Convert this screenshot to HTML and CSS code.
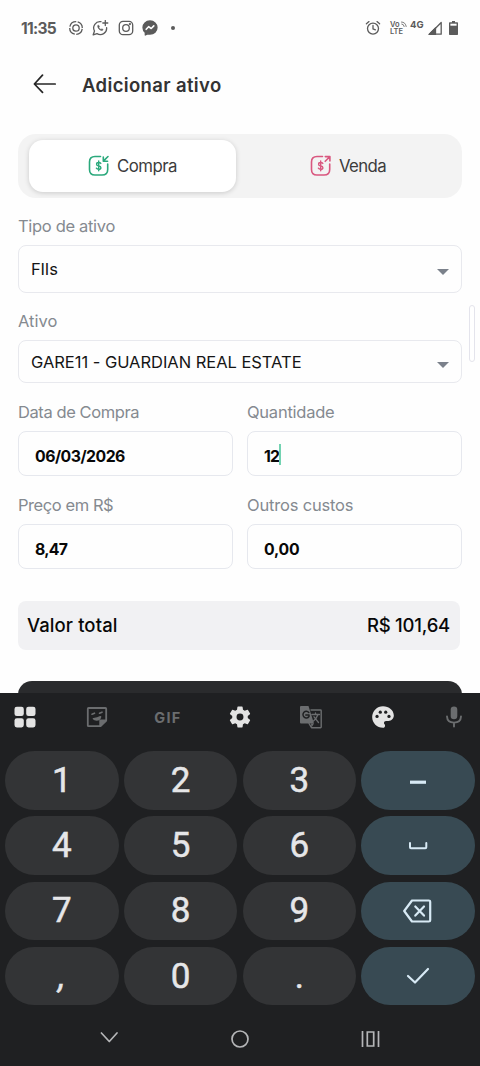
FILE: index.html
```html
<!DOCTYPE html>
<html lang="pt-BR">
<head>
<meta charset="utf-8">
<title>Adicionar ativo</title>
<link rel="stylesheet" href="styles.css">
</head>
<body>
<div class="screen">
  <div class="status">
    <div class="status-left">
      <span class="clock">11:35</span>
      <svg class="s-ico" width="16" height="16" viewBox="0 0 16 16"><circle cx="8" cy="8" r="6.3" stroke-dasharray="8.400 1.500" stroke-dashoffset="-1" class="butt"/><circle cx="8" cy="8" r="3.2"/></svg>
      <svg class="s-ico" width="17" height="16" viewBox="0 0 17 16"><path d="M9 1.7A6.3 6.3 0 0 0 2.500 11L1.200 14.800 5 13.600A6.3 6.3 0 0 0 14.600 7.600M13.300.500V5.500M10.800 3H15.800"/><path d="M5.800 5.500C5.200 7 7 10.300 9.800 10.400 11 10.300 11.200 9.800 11 9.400L9.800 8.900 9 9.600C8 9.200 7.200 8.400 6.900 7.500L7.400 6.700 6.800 5.500Z" class="solid thin"/></svg>
      <svg class="s-ico" width="16" height="16" viewBox="0 0 16 16"><rect x="1.3" y="1.3" width="13.4" height="13.4" rx="3.7"/><circle cx="8" cy="8" r="3.3"/><circle cx="11.9" cy="4.1" r=".5"/></svg>
      <svg class="s-ico" width="16" height="16" viewBox="0 0 16 16"><path d="M8 1C4 1 1 3.8 1 7.500c0 2 .8 3.700 2.300 4.900V15l2.300-1.200c.8.2 1.600.3 2.400.3 4 0 7-2.900 7-6.600S12 1 8 1Z" class="solid"/><path d="M4.200 9.300 6.600 6.700 9.200 8.500 11.800 5.900" stroke="#fff" stroke-width="1.600"/></svg>
      <span class="dot"></span>
    </div>
    <div class="status-right">
      <svg class="s-ico alarm" width="16" height="16" viewBox="0 0 16 16"><circle cx="8" cy="8.600" r="5.500"/><path d="M8 5.400V8.900L10.400 9.800M1.400 3.800 4 1.600M14.600 3.800 12 1.600"/></svg>
      <span class="volte"><span class="vo">Vo<svg width="6" height="6" viewBox="0 0 6 6"><path d="M.5 1Q4.500 1 5.200 5.500M.8 3Q2.800 3 3.200 5.500"/></svg></span><span>LTE</span></span>
      <span class="net">4G</span>
      <svg class="s-ico signal" width="14" height="14" viewBox="0 0 14 14"><path d="M1.500 13.200 13.200 1.500V13.200Z"/><path d="M1 13.500 7.500 7V13.500Z" class="solid"/></svg>
      <svg class="battery" width="9" height="14" viewBox="0 0 9 14"><path d="M3 0H6V1.300H8.300Q9 1.300 9 2V13.300Q9 14 8.300 14H.7Q0 14 0 13.300V2Q0 1.300.7 1.300H3Z" fill="#5b5b5b"/><path d="M1.400 2.700H7.600V4.700H1.400Z" fill="#fff"/></svg>
    </div>
  </div>

  <header class="header">
    <svg class="back" width="24" height="20" viewBox="0 0 24 20"><path d="M9.500 1.200 1.400 10 9.500 18.400M1.600 10H22.200"/></svg>
    <h1>Adicionar ativo</h1>
  </header>

  <main class="form">
    <div class="segment">
      <button class="seg active">
        <svg class="seg-ico buy" width="22" height="22" viewBox="0 0 22 22"><path d="M12.500 1.500H7Q1.500 1.500 1.500 7V14.500Q1.500 20 7 20H14Q19.700 20 19.700 14.500V9"/><path d="M20 1.500 15.600 5.900M15.300 2V6.300H19.600"/><path class="cur" d="M12.800 8.400Q12.200 7.500 10.600 7.500 8.600 7.500 8.600 9.200 8.600 10.700 10.700 10.900 12.900 11.200 12.900 12.700 12.900 14.300 10.700 14.300 9 14.300 8.400 13.200M10.700 6V15.800"/></svg>
        <span class="t-compra">Compra</span>
      </button>
      <button class="seg sell-tab">
        <svg class="seg-ico sell" width="22" height="22" viewBox="0 0 22 22"><path d="M12.500 1.500H7Q1.500 1.500 1.500 7V14.500Q1.500 20 7 20H14Q19.700 20 19.700 14.500V9"/><path d="M15.200 6.300 19.700 1.800M15.300 1.600H19.900V6"/><path class="cur" d="M12.800 8.400Q12.200 7.500 10.600 7.500 8.600 7.500 8.600 9.200 8.600 10.700 10.700 10.900 12.900 11.200 12.900 12.700 12.900 14.300 10.700 14.300 9 14.300 8.400 13.200M10.700 6V15.800"/></svg>
        <span class="t-venda">Venda</span>
      </button>
    </div>

    <label class="label l1"><span class="t-tipo">Tipo de ativo</span></label>
    <div class="select s1"><span class="t-fiis">FIIs</span><i class="caret"></i></div>

    <label class="label l2"><span>Ativo</span></label>
    <div class="select s2"><span class="t-gare">GARE11 - GUARDIAN REAL ESTATE</span><i class="caret"></i></div>

    <div class="pair">
      <div><label class="label"><span class="t-data">Data de Compra</span></label><div class="input"><span class="t-date">06/03/2026</span></div></div>
      <div><label class="label"><span class="t-qtd">Quantidade</span></label><div class="input"><span class="t-qty">12</span><i class="cursor"></i></div></div>
    </div>
    <div class="pair">
      <div><label class="label"><span class="t-preco">Preço em R$</span></label><div class="input"><span class="t-price">8,47</span></div></div>
      <div><label class="label"><span class="t-outros">Outros custos</span></label><div class="input"><span class="t-cost">0,00</span></div></div>
    </div>

    <div class="total"><span class="t-valor">Valor total</span><span class="t-sum">R$ 101,64</span></div>
    <div class="submit"></div>
  </main>
  <i class="scroll"></i>

  <section class="keyboard">
    <div class="tools">
      <span class="tool"><svg width="24" height="24" viewBox="0 0 24 24" fill="#e3e3e3"><rect x="1.500" y="1.800" width="9.300" height="9.200" rx="2.300"/><rect x="13.200" y="1.800" width="9.300" height="9.200" rx="2.300"/><rect x="1.500" y="13.200" width="9.300" height="9.200" rx="2.300"/><rect x="13.200" y="13.200" width="9.300" height="9.200" rx="2.300"/></svg></span>
      <span class="tool"><svg class="dim" width="24" height="24" viewBox="0 0 24 24"><path d="M3.500 3H20.500Q21.200 3 21.200 3.700V15.500L15.500 21.200H3.500Q2.800 21.200 2.800 20.500V3.700Q2.800 3 3.500 3Z"/><path d="M15.200 21V15.300H21Z" fill="#6b6d6f"/><path d="M7 9.200 9.500 8.200M14.500 8.200 17 7.200M8.500 13.700Q12.500 13.700 15.500 11.800 15 14.700 11.500 14.900 9.500 14.900 8.500 13.700Z" stroke-width="1.600"/></svg></span>
      <span class="tool"><span class="gif">GIF</span></span>
      <span class="tool"><svg width="26" height="26" viewBox="0 0 24 24" fill="#e3e3e3"><path d="M19.140 12.940c.04-.3.060-.61.060-.94 0-.32-.02-.64-.07-.94l2.030-1.580a.49.49 0 0 0 .12-.61l-1.920-3.320a.49.49 0 0 0-.59-.22l-2.390.96c-.5-.38-1.030-.7-1.620-.94L14.400 2.810a.48.48 0 0 0-.48-.41h-3.840a.47.47 0 0 0-.47.41L9.250 5.350c-.59.24-1.130.57-1.620.94l-2.390-.96a.48.48 0 0 0-.59.22L2.740 8.870a.47.47 0 0 0 .12.610l2.030 1.580c-.05.3-.09.63-.09.94s.02.64.07.94l-2.030 1.580a.49.49 0 0 0-.12.610l1.920 3.320c.12.22.37.29.59.22l2.390-.96c.5.38 1.030.7 1.620.94l.36 2.540c.05.24.24.41.48.41h3.840c.24 0 .44-.17.470-.41l.36-2.540c.59-.24 1.130-.56 1.620-.94l2.390.96c.22.080.47 0 .59-.22l1.920-3.320a.47.47 0 0 0-.12-.610zM12 15.200A3.200 3.200 0 1 1 12 8.800a3.200 3.200 0 0 1 0 6.400Z"/></svg></span>
      <span class="tool"><svg class="dim" width="24" height="24" viewBox="0 0 24 24"><path d="M12 5H21.500Q22.200 5 22.200 5.700V22Q22.200 22.700 21.500 22.700H12.500L10 18.500" stroke-width="1.400"/><path d="M2 1H9.500L15 18.500H2Q1 18.500 1 17.500V2Q1 1 2 1Z" fill="#6b6d6f" stroke="none"/><path d="M12 18.500H15L12.500 22.500Z" fill="#6b6d6f" stroke="none"/><path d="M9.800 7.500A3.300 3.300 0 1 0 10 11.500V10H6.800" stroke="#1f2022" stroke-width="1.500"/><path d="M12.800 9.500H20.500M16.500 8V9.500M19 9.500Q17.500 13.500 14.500 16M15 11.800 19.500 17.500" stroke-width="1.300"/></svg></span>
      <span class="tool"><svg width="26" height="26" viewBox="0 0 24 24" fill="#e3e3e3"><path d="M12 2C6.500 2 2 6.500 2 12c0 5.500 4.500 10 10 10 1.100 0 1.900-.8 1.900-1.900 0-.6-.2-1-.5-1.300-.3-.4-.5-.8-.5-1.300 0-1.100.8-1.900 1.900-1.900h2.200c2.800 0 5-2.300 5-5C22 5.700 17.500 2 12 2Z"/><g fill="#1f2022"><circle cx="6.500" cy="11.500" r="1.500"/><circle cx="9.500" cy="7.500" r="1.500"/><circle cx="14.500" cy="7.500" r="1.500"/><circle cx="17.500" cy="11.500" r="1.500"/></g></svg></span>
      <span class="tool"><svg class="dim" width="24" height="24" viewBox="0 0 24 24"><rect x="8.700" y="1.500" width="6.600" height="12.800" rx="3.300" fill="#6b6d6f" stroke="none"/><path d="M5 11.500Q5.300 17.600 12 17.600T19 11.500M12 17.600V21.500" stroke-width="1.900"/></svg></span>
    </div>
    <div class="keys">
      <div class="key">1</div><div class="key">2</div><div class="key">3</div>
      <div class="key fn"><svg width="30" height="30" viewBox="0 0 30 30"><path class="dash" d="M7 17.200H23"/></svg></div>
      <div class="key">4</div><div class="key">5</div><div class="key">6</div>
      <div class="key fn"><svg width="30" height="30" viewBox="0 0 30 30"><path d="M7 12V16.300Q7 17.300 8 17.300H22.300Q23.300 17.300 23.300 16.300V12" stroke-width="2"/></svg></div>
      <div class="key">7</div><div class="key">8</div><div class="key">9</div>
      <div class="key fn"><svg width="30" height="30" viewBox="0 0 30 30"><path d="M9 4.500H25.800Q27.200 4.500 27.200 5.800V24.200Q27.200 25.500 25.800 25.500H9L1.200 15Z" stroke-width="2.200"/><path d="M12.300 10.500 21 19.600M21 10.500 12.300 19.600" stroke-width="2.200"/></svg></div>
      <div class="key comma">,</div><div class="key">0</div><div class="key">.</div>
      <div class="key fn"><svg width="30" height="30" viewBox="0 0 30 30"><path d="M5 15 12 21.500 25 8" stroke-width="2.200"/></svg></div>
    </div>
    <div class="nav">
      <svg width="20" height="20" viewBox="0 0 20 20"><path d="M2.400 4 10.300 12.500 18 4"/></svg>
      <svg width="20" height="20" viewBox="0 0 20 20"><circle cx="10" cy="10" r="8"/></svg>
      <svg width="20" height="20" viewBox="0 0 20 20"><path class="square" d="M2.500 2V18M18.500 2V18M7.300 3H13.700V17H7.300Z"/></svg>
    </div>
  </section>
</div>
</body>
</html>
```
FILE: styles.css
```css
* { box-sizing: border-box; }
body { margin: 0; background: #fefefe; font-family: Inter, "Liberation Sans", sans-serif; }
svg { display: block; flex: none; }
svg path, svg circle, svg rect { stroke-linecap: round; stroke-linejoin: round; }
svg .butt, svg .dash { stroke-linecap: butt; }
svg .square { stroke-linecap: butt; stroke-linejoin: miter; }
.screen { position: relative; width: 480px; height: 1066px; overflow: hidden; display: flex; flex-direction: column; background: #fefefe; }

.status { height: 56px; flex: none; padding: 0 21px; display: flex; justify-content: space-between; align-items: center; color: #5b5b5b; }
.status-left, .status-right { display: flex; align-items: center; }
.clock { width: 47px; font-size: 15.500px; font-weight: 700; letter-spacing: -.7px; white-space: nowrap; }
.s-ico { fill: none; stroke: #5b5b5b; stroke-width: 1.300; }
.s-ico .solid { fill: #5b5b5b; }
.s-ico .thin { stroke-width: .6; }
.status-left .s-ico { margin-right: 8.300px; }
.dot { width: 4px; height: 4px; border-radius: 50%; background: #5b5b5b; margin-left: 5px; }
.alarm { margin-right: 9px; }
.volte { display: flex; flex-direction: column; width: 17px; font-size: 7.500px; line-height: 7.500px; font-weight: 600; }
.vo { display: flex; align-items: center; gap: 1px; }
.vo svg { fill: none; stroke: #5b5b5b; stroke-width: .8; }
.net { width: 17px; margin-left: 3px; margin-right: 1px; margin-bottom: 6px; font-size: 9.500px; line-height: 10px; font-weight: 700; white-space: nowrap; }
.signal { margin-right: 7px; }
.status-right { margin-right: 1px; }

.header { height: 78px; flex: none; display: flex; align-items: center; padding: 0 0 22px 33px; }
.back { fill: none; stroke: #262626; stroke-width: 1.700; margin-right: 25px; }
h1 { margin: 0; font-size: 18.500px; font-weight: 600; line-height: 24px; letter-spacing: .36px; color: #333; padding-top: 1px; }

.form { padding: 0 18px; display: flex; flex-direction: column; }
.segment { height: 64px; border-radius: 18px; background: #f3f3f3; padding: 6px 11px; display: grid; grid-template-columns: 207px 1fr; gap: 4px; }
.seg { border: 0; background: none; border-radius: 14px; height: 52px; padding: 0; display: flex; align-items: center; justify-content: center; gap: 7px; font: 400 16.800px Inter, sans-serif; color: #3c3c3c; }
.seg.active { background: #fff; box-shadow: 0 1px 5px rgba(0,0,0,.17); }
.sell-tab { padding-left: 5px; }
.seg-ico { fill: none; stroke-width: 1.600; }
.seg-ico .cur { stroke-width: 1.400; }
.buy { stroke: #2ba97c; }
.sell { stroke: #d9577f; }
.t-compra { letter-spacing: -.5px; }
.t-venda { letter-spacing: -.6px; }

.label { display: flex; align-items: center; height: 24px; font-size: 16.500px; color: #858a90; white-space: nowrap; }
.l1 { margin-top: 16px; margin-bottom: 7px; }
.l2 { margin-top: 17px; margin-bottom: 7px; }
.t-tipo { letter-spacing: -.32px; }
.t-data { letter-spacing: -.42px; }
.t-qtd { letter-spacing: -.25px; }
.t-preco { letter-spacing: -.43px; }
.t-outros { letter-spacing: -.18px; }
.select { display: flex; align-items: center; justify-content: space-between; border: 1.500px solid #e8e9ee; border-radius: 8px; padding: 0 12px; color: #151515; font-size: 16.500px; white-space: nowrap; }
.t-gare { letter-spacing: -.03px; }
.t-fiis { letter-spacing: -.15px; }
.s1 { height: 48px; }
.s2 { height: 43px; }
.s1 + .l2 { margin-top: 16px; }
.caret { width: 0; height: 0; border: 6px solid transparent; border-bottom: 0; border-top: 6px solid #7b818b; margin-top: 6px; }
.pair { display: grid; grid-template-columns: 215px 215px; gap: 14px; margin-top: 17px; }
.pair .label { margin-bottom: 7px; }
.input { height: 45px; border: 1.500px solid #e6e8ee; border-radius: 8px; padding: 5px 0 0 16px; display: flex; align-items: center; font-size: 15.800px; font-weight: 700; color: #080808; }
.t-date { letter-spacing: -.5px; }
.t-qty { letter-spacing: -.8px; }
.t-price { letter-spacing: -.7px; }
.t-cost { letter-spacing: -.2px; }
.cursor { width: 2px; height: 21px; background: #73d3b2; margin-bottom: 3px; }
.total { width: 442px; height: 49px; margin-top: 32px; border-radius: 8px; background: #f1f1f3; display: flex; align-items: center; justify-content: space-between; padding: 0 10px 1px 9px; font-size: 18.500px; font-weight: 500; color: #080808; }
.t-valor { letter-spacing: .1px; }
.t-sum { letter-spacing: -.22px; }
.submit { height: 48px; margin-top: 31px; border-radius: 14px; background: #2a2b2d; }
.scroll { position: absolute; right: 5px; top: 305px; width: 6px; height: 57px; border: 1.500px solid #e4e4ec; border-radius: 3px; background: #fff; }

.keyboard { position: absolute; left: 0; right: 0; top: 693px; height: 373px; background: #1f2022; }
.tools { height: 58px; padding: 0 13px 10px 12px; display: flex; align-items: center; justify-content: space-between; }
.tool { width: 26px; display: flex; justify-content: center; }
.dim { fill: none; stroke: #6b6d6f; stroke-width: 1.800; }
.gif { font-size: 14.500px; font-weight: 700; letter-spacing: 1.300px; color: #6b6d6f; }
.keys { display: grid; grid-template-columns: repeat(4, 113.500px); column-gap: 5.300px; row-gap: 6.800px; padding-left: 5px; }
.key { height: 58.500px; border-radius: 30px; background: #333436; display: flex; align-items: center; justify-content: center; color: #e6e6e8; font: 400 35px Roboto, sans-serif; -webkit-text-stroke: .5px #e6e6e8; }
.comma { font-style: italic; }
.fn { background: #384a53; }
.fn svg { fill: none; stroke: #d8eaf5; }
.fn .dash { stroke-width: 3.200; }
.nav { height: 68px; display: flex; align-items: center; justify-content: space-between; padding: 0 100px 0 99px; }
.nav svg { fill: none; stroke: #b5b6b8; stroke-width: 1.700; }
```
